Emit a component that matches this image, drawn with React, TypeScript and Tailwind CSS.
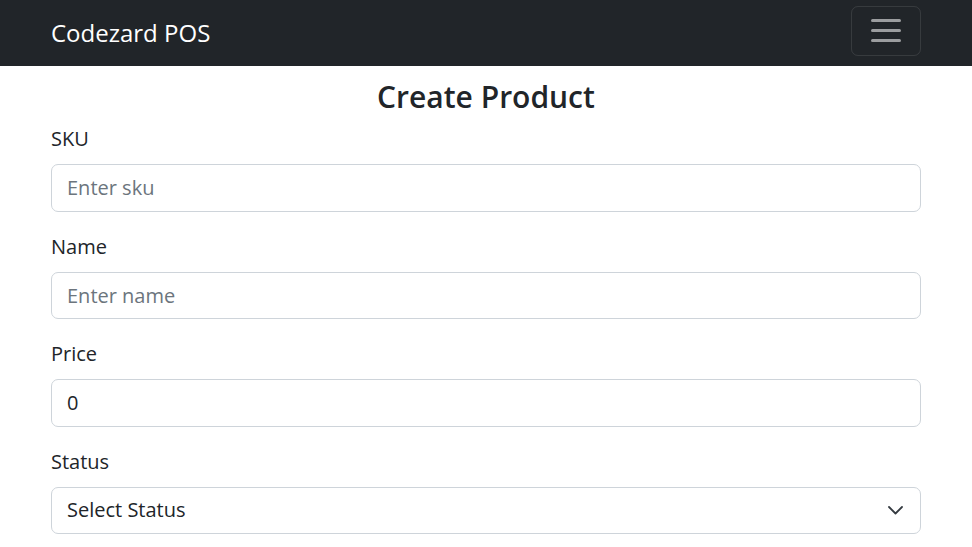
export default function App() {
  const fields = [
    { label: "SKU", placeholder: "Enter sku", value: "" },
    { label: "Name", placeholder: "Enter name", value: "" },
    { label: "Price", placeholder: "", value: "0" },
  ]

  return (
    <div className="min-h-[547px] bg-white text-[#212529] font-['Open_Sans',sans-serif]">
      {/* Navbar */}
      <nav className="h-[66px] bg-[#212529]">
        <div className="w-[870px] mx-auto h-full flex items-center justify-between">
          <span className="text-[24px] leading-[38px] text-white">Codezard POS</span>
          <button className="w-[70px] h-[50px] mt-[-5px] border border-white/10 rounded-[7px] flex flex-col items-center justify-center gap-[7.5px]">
            <span className="block w-[30px] h-[2.5px] bg-white/55 rounded" />
            <span className="block w-[30px] h-[2.5px] bg-white/55 rounded" />
            <span className="block w-[30px] h-[2.5px] bg-white/55 rounded" />
          </button>
        </div>
      </nav>

      {/* Form */}
      <div className="w-[870px] mx-auto">
        <h3 className="mt-[12px] mb-[8px] text-center text-[30px] leading-[38px] font-semibold">
          Create Product
        </h3>

        {fields.map((f) => (
          <div key={f.label} className="mb-[20px]">
            <label className="block mb-[10px] text-[20px] leading-[30px]">{f.label}</label>
            <input
              type="text"
              placeholder={f.placeholder}
              defaultValue={f.value}
              className="w-full h-[47.5px] px-[15px] text-[20px] border border-[#ced4da] rounded-[7px] placeholder:text-[#6c757d] outline-none"
            />
          </div>
        ))}

        <div className="mb-[20px]">
          <label className="block mb-[10px] text-[20px] leading-[30px]">Status</label>
          <div className="relative">
            <select className="w-full h-[47.5px] pl-[15px] pr-[50px] text-[20px] border border-[#ced4da] rounded-[7px] appearance-none bg-white outline-none">
              <option>Select Status</option>
            </select>
            <svg
              className="absolute right-[18px] top-[19px] pointer-events-none"
              width="15"
              height="9"
              viewBox="0 0 15 9"
              fill="none"
              stroke="#343a40"
              strokeWidth="1.8"
              strokeLinecap="round"
              strokeLinejoin="round"
            >
              <path d="M1 1l6.5 6.5L14 1" />
            </svg>
          </div>
        </div>
      </div>
    </div>
  )
}
